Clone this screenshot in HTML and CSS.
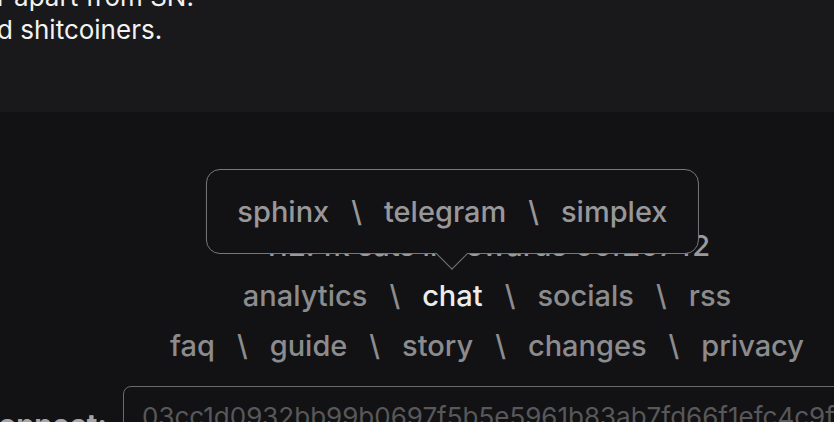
FILE: index.html
```html
<!DOCTYPE html>
<html lang="en">
<head>
<meta charset="utf-8">
<title>footer</title>
<link rel="stylesheet" href="styles.css">
</head>
<body>
  <section class="intro">
    <p class="intro-text">r apart from SN.<br>d shitcoiners.</p>
  </section>
  <footer class="footer">
    <div class="row row-muted">112.4k sats in rewards 05f20742</div>
    <nav class="row">
      <a class="link" href="#">analytics</a><span class="sep">\</span><span class="link link-active">chat<span class="popover"><a class="pop-link" href="#">sphinx</a><span class="sep">\</span><a class="pop-link" href="#">telegram</a><span class="sep">\</span><a class="pop-link" href="#">simplex</a></span></span><span class="sep">\</span><a class="link" href="#">socials</a><span class="sep">\</span><a class="link" href="#">rss</a>
    </nav>
    <nav class="row">
      <a class="link" href="#">faq</a><span class="sep">\</span><a class="link" href="#">guide</a><span class="sep">\</span><a class="link" href="#">story</a><span class="sep">\</span><a class="link" href="#">changes</a><span class="sep">\</span><a class="link" href="#">privacy</a>
    </nav>
    <div class="connect">
      <span class="connect-label">connect:</span>
      <div class="connect-input">03cc1d0932bb99b0697f5b5e5961b83ab7fd66f1efc4c9f5c7bad66c1bcbe78f02@3.13.0.0:9735</div>
    </div>
  </footer>
</body>
</html>
```
FILE: styles.css
```css
html, body {
  margin: 0;
  padding: 0;
  overflow: hidden;
  background: #121214;
  font-family: Inter, "Noto Sans", sans-serif;
}

.intro {
  background: #19191b;
  height: 112px;
  overflow: hidden;
}

.intro-text {
  margin: -20px 0 0 -3px;
  color: #f2f2f2;
  font-size: 26px;
  line-height: 33px;
  white-space: nowrap;
}

.footer {
  padding: 109px 0 0 140px;
  text-align: center;
}

.row {
  font-size: 29px;
  font-weight: 500;
  line-height: 50px;
  white-space: nowrap;
  color: #8c8c8e;
}

.row-muted {
  color: #9a9a9c;
}

.link {
  position: relative;
  display: inline-block;
  color: #8c8c8e;
  text-decoration: none;
}

.link-active {
  color: #ececec;
}

.sep {
  display: inline-block;
  margin: 0 22px;
  color: #8c8c8e;
}

.popover {
  position: absolute;
  left: 50%;
  bottom: calc(100% + 17px);
  transform: translateX(-50%);
  background: #121214;
  border: 1px solid #78787a;
  border-radius: 14px;
  padding: 26px 30px 25px;
  line-height: 32px;
  white-space: nowrap;
  color: #98989a;
}

.popover::after {
  content: "";
  position: absolute;
  left: 50%;
  bottom: -12px;
  width: 22px;
  height: 22px;
  background: #121214;
  border-right: 1px solid #78787a;
  border-bottom: 1px solid #78787a;
  transform: translateX(-50%) rotate(45deg);
}

.pop-link {
  color: #98989a;
  text-decoration: none;
}

.popover .sep {
  margin: 0 22px;
  color: #98989a;
}

.connect {
  display: flex;
  align-items: flex-start;
  gap: 16px;
  margin: 15px 0 0 -140px;
  text-align: left;
  white-space: nowrap;
}

.connect-label {
  flex: none;
  width: 130px;
  margin-top: 14px;
  margin-left: -23px;
  text-align: right;
  font-size: 29px;
  font-weight: 700;
  color: #a6a6a8;
  line-height: 50px;
}

.connect-input {
  flex: none;
  width: 760px;
  height: 56px;
  border: 1px solid #6a6a6c;
  border-radius: 8px;
  padding: 0 18px;
  font-size: 26px;
  line-height: 60px;
  color: #58585a;
  overflow: hidden;
}
```
